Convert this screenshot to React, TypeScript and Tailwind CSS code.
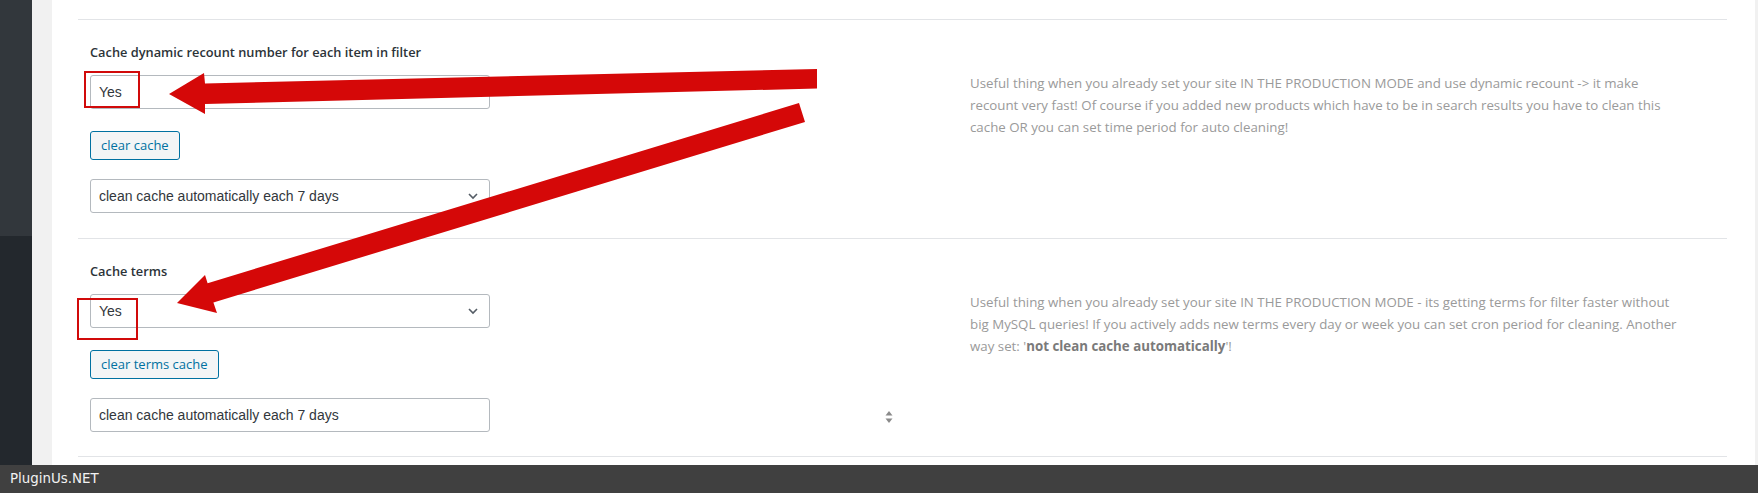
import React from "react";

const sans = "font-['Open_Sans',sans-serif]";

function Chevron() {
  return (
    <svg width="16" height="16" viewBox="0 0 20 20" className="shrink-0">
      <path d="M5 7.5l5 5 5-5" fill="none" stroke="#555d66" strokeWidth="2" />
    </svg>
  );
}

function SelectBox({ value, arrow = true }: { value: string; arrow?: boolean }) {
  return (
    <div className="flex h-[34px] w-[400px] items-center justify-between rounded-[3px] border border-[#b4b9be] bg-white px-2 font-['Liberation_Sans',Arial,sans-serif] text-[14px] text-[#32373c]">
      <span>{value}</span>
      {arrow && <Chevron />}
    </div>
  );
}

function WpButton({ children }: { children: React.ReactNode }) {
  return (
    <div className="flex h-[29px] w-fit items-center rounded-[3px] border border-[#0071a1] bg-[#f3f5f6] px-[10px] text-[13px] text-[#0071a1]">
      {children}
    </div>
  );
}

function Section({
  label,
  height,
  children,
  desc,
}: {
  label: string;
  height: string;
  children: React.ReactNode;
  desc: React.ReactNode;
}) {
  return (
    <div className={`flex border-t border-[#e2e4e7] px-3 ${height}`}>
      <div className="w-[880px] shrink-0 pt-[22px]">
        <div className="text-[12.8px] leading-5 font-semibold text-[#2c3338]">{label}</div>
        <div className="mt-[13px]">{children}</div>
      </div>
      <div className="pt-[52px] text-[13.3px] leading-[22px] whitespace-nowrap text-[#9a9a9a]">{desc}</div>
    </div>
  );
}

function Arrows() {
  return (
    <svg className="pointer-events-none absolute top-0 left-0" width="1758" height="493" viewBox="0 0 1758 493">
      <polygon fill="#d50808" points="169,94 204,73 205,83.5 817,69 817,88.5 205,104 205,114" />
      <polygon fill="#d50808" points="177,303 205,275 207.6,283.2 799,103 805,122 213.4,302.4 217,313" />
      <rect x="85" y="72" width="54" height="35" fill="none" stroke="#d10a0a" strokeWidth="2" />
      <rect x="78" y="299" width="59" height="40" fill="none" stroke="#d10a0a" strokeWidth="2" />
    </svg>
  );
}

export default function App() {
  return (
    <div className={`relative flex h-[493px] w-[1758px] flex-col overflow-hidden bg-white ${sans}`}>
      <div className="flex h-[465px]">
        <div className="flex w-[32px] flex-col">
          <div className="h-[236px] bg-[#32373c]" />
          <div className="flex-1 bg-[#23282d]" />
        </div>
        <div className="w-[20px] bg-[#f1f1f1]" />
        <div className="flex-1 bg-white pr-[28px] pl-[26px]">
          <div className="h-[19px]" />
          <Section
            label="Cache dynamic recount number for each item in filter"
            height="h-[219px]"
            desc={
              <>
                <div>Useful thing when you already set your site IN THE PRODUCTION MODE and use dynamic recount -&gt; it make</div>
                <div>recount very fast! Of course if you added new products which have to be in search results you have to clean this</div>
                <div>cache OR you can set time period for auto cleaning!</div>
              </>
            }
          >
            <SelectBox value="Yes" arrow={false} />
            <div className="mt-[22px]">
              <WpButton>clear cache</WpButton>
            </div>
            <div className="mt-[19px]">
              <SelectBox value="clean cache automatically each 7 days" />
            </div>
          </Section>
          <Section
            label="Cache terms"
            height="h-[218px]"
            desc={
              <>
                <div>Useful thing when you already set your site IN THE PRODUCTION MODE - its getting terms for filter faster without</div>
                <div>big MySQL queries! If you actively adds new terms every day or week you can set cron period for cleaning. Another</div>
                <div>
                  way set: '<b className="font-bold text-[#7a7a7a]">not clean cache automatically</b>'!
                </div>
              </>
            }
          >
            <SelectBox value="Yes" />
            <div className="mt-[22px]">
              <WpButton>clear terms cache</WpButton>
            </div>
            <div className="mt-[19px] flex items-center">
              <SelectBox value="clean cache automatically each 7 days" arrow={false} />
              <svg width="8" height="14" viewBox="0 0 8 14" className="mt-[4px] ml-[395px]">
                <path d="M4 1L7.5 5.5H0.5Z" fill="#8a8a8a" />
                <path d="M4 13L7.5 8.5H0.5Z" fill="#8a8a8a" />
              </svg>
            </div>
          </Section>
          <div className="border-t border-[#e2e4e7]" />
        </div>
        <div className="w-[3px] bg-[#f1f1f1]" />
      </div>
      <div className="flex h-[28px] items-center bg-[#404040] pl-[10px] font-['DejaVu_Sans',sans-serif] text-[13.4px] text-[#f2f2f2]">
        PluginUs.NET
      </div>
      <Arrows />
    </div>
  );
}
